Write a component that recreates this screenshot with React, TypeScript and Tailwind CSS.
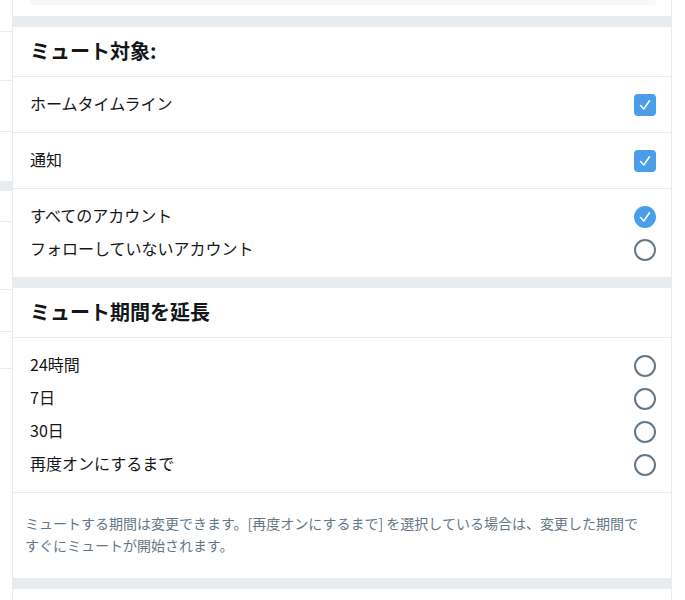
import React from "react";

const font = {
  fontFamily: '"Noto Sans CJK JP", "Noto Sans", sans-serif',
};

function Check() {
  return (
    <svg viewBox="0 0 22 22" className="w-[22px] h-[22px]">
      <polyline points="6.5,11.5 9.8,15 15.5,6.8" fill="none" stroke="white" strokeWidth="1.6" strokeLinecap="round" strokeLinejoin="round" />
    </svg>
  );
}

function CheckBox() {
  return (
    <div className="w-[22px] h-[22px] rounded-[4px] bg-[#4a9ee9] flex items-center justify-center">
      <Check />
    </div>
  );
}

function Radio({ checked }: { checked?: boolean }) {
  if (checked) {
    return (
      <div className="w-[22px] h-[22px] rounded-full bg-[#4a9ee9] flex items-center justify-center">
        <Check />
      </div>
    );
  }
  return <div className="w-[22px] h-[22px] rounded-full border-2 border-[#657786] box-border" />;
}

function Band() {
  return <div className="h-[11px] bg-[#e6ecf0]" />;
}

function Header({ children }: { children: React.ReactNode }) {
  return (
    <div className="h-[50px] flex items-center pl-[17px] pr-[15px] border-b border-[#e6ecf0] text-[20px] font-bold text-[#14171a]">
      <span className="-mt-[2px]">{children}</span>
    </div>
  );
}

function CheckRow({ label }: { label: string }) {
  return (
    <div className="h-[56px] flex items-center justify-between pl-[17px] pr-[15px] border-b border-[#e6ecf0] text-[16px] text-[#14171a]">
      <span className="-mt-[3px]">{label}</span>
      <CheckBox />
    </div>
  );
}

function RadioRow({ label, checked }: { label: string; checked?: boolean }) {
  return (
    <div className="h-[33px] flex items-center justify-between text-[16px] text-[#14171a]">
      <span className="-mt-[3px]">{label}</span>
      <Radio checked={checked} />
    </div>
  );
}

export default function App() {
  return (
    <div className="w-[685px] h-[600px] bg-white flex overflow-hidden" style={font}>
      {/* left strip */}
      <div className="w-[12px] flex flex-col shrink-0">
        <div className="h-[32px] border-b border-[#e6ecf0]" />
        <div className="h-[49px] border-b border-[#e6ecf0]" />
        <div className="h-[51px] border-b border-[#e6ecf0]" />
        <div className="h-[49px]" />
        <div className="h-[10px] bg-[#e6ecf0]" />
        <div className="h-[31px] border-b border-[#e6ecf0]" />
        <div className="h-[68px] border-b border-[#e6ecf0]" />
        <div className="h-[42px] border-b border-[#e6ecf0]" />
        <div className="h-[37px] border-b border-[#e6ecf0]" />
      </div>

      {/* main panel */}
      <div className="w-[660px] shrink-0 border-x border-[#e6ecf0] flex flex-col">
        <div className="h-[16px] pl-[17px] pr-[15px]">
          <div className="h-[5px] bg-[#f5f8fa] rounded-b-[4px]" />
        </div>
        <Band />
        <Header>ミュート対象:</Header>
        <CheckRow label="ホームタイムライン" />
        <CheckRow label="通知" />
        <div className="pl-[17px] pr-[15px] pt-[11px] pb-[11px]">
          <RadioRow label="すべてのアカウント" checked />
          <RadioRow label="フォローしていないアカウント" />
        </div>
        <Band />
        <Header>ミュート期間を延長</Header>
        <div className="pl-[17px] pr-[15px] pt-[11px] pb-[11px] border-b border-[#e6ecf0]">
          <RadioRow label="24時間" />
          <RadioRow label="7日" />
          <RadioRow label="30日" />
          <RadioRow label="再度オンにするまで" />
        </div>
        <div className="pl-[12px] pr-[30px] pt-[19px] pb-[22px] text-[14px] leading-[22px] text-[#657786]">
          ミュートする期間は変更できます。[再度オンにするまで] を選択している場合は、変更した期間ですぐにミュートが開始されます。
        </div>
        <Band />
        <div className="flex-1" />
      </div>

      <div className="flex-1" />
    </div>
  );
}
